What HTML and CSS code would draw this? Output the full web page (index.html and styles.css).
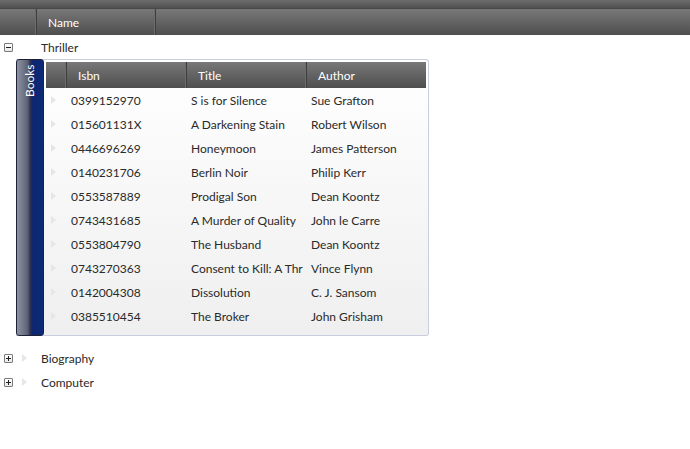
FILE: index.html
```html
<!DOCTYPE html>
<html>
<head>
<meta charset="utf-8">
<link rel="stylesheet" href="styles.css">
</head>
<body>
<div class="topstrip"></div>
<div class="header">
  <div class="hcell first"></div>
  <div class="hcell name">Name</div>
  <div class="hcell rest"></div>
</div>
<div class="tree">
  <div class="trow">
    <span class="exp minus"></span>
    <span class="tri hidden"></span>
    <span class="label">Thriller</span>
  </div>
  <div class="nested">
    <div class="tab"><span class="tabtext">Books</span></div>
    <div class="grid">
      <div class="ghead">
        <div class="gh sel"></div>
        <div class="gh col">Isbn</div>
        <div class="gh col">Title</div>
        <div class="gh col">Author</div>
      </div>
      <div class="gbody">
        <div class="grow"><span class="rsel"><span class="tri"></span></span><span class="c">0399152970</span><span class="c">S is for Silence</span><span class="c">Sue Grafton</span></div>
        <div class="grow"><span class="rsel"><span class="tri"></span></span><span class="c">015601131X</span><span class="c">A Darkening Stain</span><span class="c">Robert Wilson</span></div>
        <div class="grow"><span class="rsel"><span class="tri"></span></span><span class="c">0446696269</span><span class="c">Honeymoon</span><span class="c">James Patterson</span></div>
        <div class="grow"><span class="rsel"><span class="tri"></span></span><span class="c">0140231706</span><span class="c">Berlin Noir</span><span class="c">Philip Kerr</span></div>
        <div class="grow"><span class="rsel"><span class="tri"></span></span><span class="c">0553587889</span><span class="c">Prodigal Son</span><span class="c">Dean Koontz</span></div>
        <div class="grow"><span class="rsel"><span class="tri"></span></span><span class="c">0743431685</span><span class="c">A Murder of Quality</span><span class="c">John le Carre</span></div>
        <div class="grow"><span class="rsel"><span class="tri"></span></span><span class="c">0553804790</span><span class="c">The Husband</span><span class="c">Dean Koontz</span></div>
        <div class="grow"><span class="rsel"><span class="tri"></span></span><span class="c"><span class="clip">0743270363</span></span><span class="c"><span class="clip">Consent to Kill: A Thriller</span></span><span class="c">Vince Flynn</span></div>
        <div class="grow"><span class="rsel"><span class="tri"></span></span><span class="c">0142004308</span><span class="c">Dissolution</span><span class="c">C. J. Sansom</span></div>
        <div class="grow"><span class="rsel"><span class="tri"></span></span><span class="c">0385510454</span><span class="c">The Broker</span><span class="c">John Grisham</span></div>
      </div>
    </div>
  </div>
  <div class="trow after">
    <span class="exp plus"></span>
    <span class="tri"></span>
    <span class="label">Biography</span>
  </div>
  <div class="trow">
    <span class="exp plus"></span>
    <span class="tri"></span>
    <span class="label">Computer</span>
  </div>
</div>
</body>
</html>
```
FILE: styles.css
```css
* { box-sizing: border-box; }
html, body { margin: 0; padding: 0; background: #fff; }
body {
  width: 690px;
  height: 449px;
  overflow: hidden;
  font-family: Lato, "Open Sans", sans-serif;
  font-size: 12px;
  color: #2a2a2a;
}
.topstrip {
  height: 9px;
  background: linear-gradient(#6c6c6c, #505050);
  border-bottom: 1px solid #484848;
}
.header {
  display: flex;
  height: 26px;
  background: linear-gradient(#787878, #4e4e4e);
  color: #fff;
}
.hcell {
  display: flex;
  align-items: center;
  border-right: 1px solid #3e3e3e;
  box-shadow: inset -1px 0 0 #6c6c6c;
}
.hcell.first { width: 37px; }
.hcell.name { width: 119px; padding-left: 11px; }
.hcell.rest { flex: 1; border-right: none; box-shadow: none; }
.tree { display: flex; flex-direction: column; }
.trow {
  display: flex;
  align-items: center;
  height: 24px;
}
.trow.after { margin-top: 10px; }
.exp {
  width: 9px;
  height: 9px;
  margin-left: 4px;
  border: 1px solid #7a7a7a;
  border-radius: 1px;
  background: linear-gradient(#fff, #e8e8e8);
  position: relative;
}
.exp::before {
  content: "";
  position: absolute;
  left: 1px; top: 3px;
  width: 5px; height: 1px;
  background: #222;
}
.exp.plus::after {
  content: "";
  position: absolute;
  left: 3px; top: 1px;
  width: 1px; height: 5px;
  background: #222;
}
.trow .tri { margin-left: 9px; }
.tri {
  width: 0; height: 0;
  border-top: 4px solid transparent;
  border-bottom: 4px solid transparent;
  border-left: 5px solid #e6e6e6;
}
.tri.hidden { visibility: hidden; }
.label { margin-left: 14px; }
.nested {
  display: flex;
  margin-left: 16px;
  width: 413px;
  height: 277px;
  border: 1px solid #c9cde0;
  border-left: none;
  border-radius: 0 3px 3px 0;
  background: linear-gradient(#fff, #efefef);
}
.tab {
  width: 28px;
  margin-top: -1px;
  margin-bottom: -1px;
  border: 1px solid #1d2138;
  border-radius: 3px;
  background: linear-gradient(90deg, #8e93a3 0%, #5d6276 40%, #2a3050 52%, #0e2670 60%, #0c2a78 100%);
  color: #fff;
  display: flex;
  justify-content: center;
  padding-top: 4px;
}
.tabtext {
  writing-mode: vertical-rl;
  transform: rotate(180deg);
  line-height: 14px;
  height: 34px;
  text-align: right;
}
.grid {
  display: flex;
  flex-direction: column;
  padding-top: 2px;
  padding-left: 2px;
}
.ghead {
  display: flex;
  height: 26px;
  width: 380px;
  background: linear-gradient(#787878, #4e4e4e);
  color: #fff;
}
.gh {
  display: flex;
  align-items: center;
  border-right: 1px solid #3e3e3e;
  box-shadow: inset -1px 0 0 #6c6c6c;
}
.gh.sel { width: 21px; }
.gh.col { width: 120px; padding-left: 11px; }
.gh.col:last-child { border-right: none; box-shadow: none; width: 119px; }
.gbody { display: flex; flex-direction: column; }
.grow {
  display: flex;
  align-items: center;
  height: 24px;
}
.rsel { width: 21px; display: flex; padding-left: 5px; }
.c {
  width: 120px;
  padding-left: 4px;
  padding-right: 4px;
  white-space: nowrap;
  color: #2a2a2a;
}
.clip {
  display: block;
  overflow: hidden;
  text-overflow: clip;
}
```
